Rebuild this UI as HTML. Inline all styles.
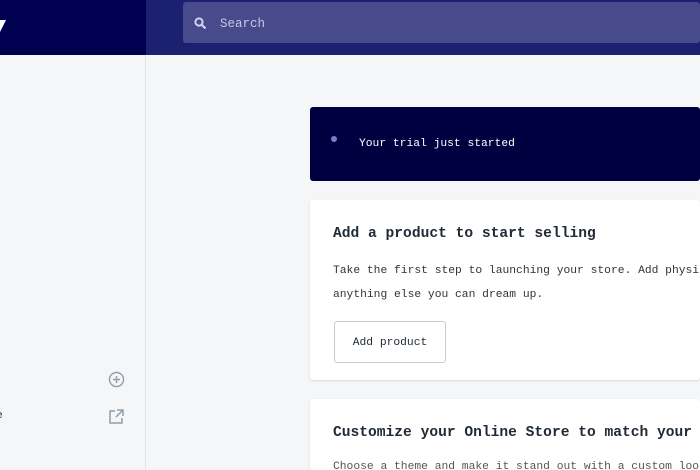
<!DOCTYPE html>
<html><head><style>
*{margin:0;padding:0;box-sizing:border-box}
html,body{width:700px;height:470px;overflow:hidden}
body{background:#f4f6f8;font-family:"Liberation Mono",monospace;position:relative}
.a{position:absolute}
</style></head><body>
<div class="a" style="left:0;top:0;width:146px;height:55px;background:#000050"></div>
<div class="a" style="left:0;top:20px;width:6px;height:12px;background:#fff;clip-path:polygon(0 0,100% 0,0 100%)"></div>
<div class="a" style="left:146px;top:0;width:554px;height:55px;background:#1c2070"></div>
<div class="a" style="left:183px;top:2px;width:517px;height:41px;background:#474b8b;border-radius:3px"></div>
<svg class="a" style="left:194px;top:17px" width="13" height="13" viewBox="0 0 13 13"><circle cx="5" cy="5" r="3.6" stroke="#cfd2ea" stroke-width="2" fill="none"/><path d="M7.6 7.6L11.5 11.5" stroke="#cfd2ea" stroke-width="2.2"/></svg>
<div class="a" style="left:220px;top:17px;color:#c5c8e4;font-size:12.5px">Search</div>
<div class="a" style="left:145px;top:55px;width:1px;height:415px;background:#e3e5e8"></div>
<div class="a" style="left:310px;top:107px;width:390px;height:74px;background:#000040;border-radius:3px"></div>
<div class="a" style="left:331px;top:136px;width:6px;height:6px;border-radius:50%;background:#7a7ccc"></div>
<div class="a" style="left:359px;top:138px;color:#fff;font-size:11.3px">Your trial just started</div>
<div class="a" style="left:310px;top:200px;width:390px;height:180px;background:#fff;border-radius:3px;box-shadow:0 1px 2px rgba(0,0,0,.12)"></div>
<div class="a" style="left:333px;top:226px;color:#212b36;font-size:14.6px;font-weight:bold">Add a product to start selling</div>
<div class="a" style="left:333px;top:259px;color:#333;font-size:11.3px;line-height:24px;white-space:nowrap">Take the first step to launching your store. Add physi<br>anything else you can dream up.</div>
<div class="a" style="left:334px;top:321px;width:112px;height:42px;border:1px solid #c4cdd5;border-radius:3px;background:#fff;color:#212b36;font-size:11.3px;line-height:42px;text-align:center">Add product</div>
<div class="a" style="left:310px;top:399px;width:390px;height:80px;background:#fff;border-radius:3px;box-shadow:0 1px 2px rgba(0,0,0,.12)"></div>
<div class="a" style="left:333px;top:425px;color:#212b36;font-size:14.6px;font-weight:bold;white-space:nowrap">Customize your Online Store to match your</div>
<div class="a" style="left:333px;top:461px;color:#555;font-size:11.3px;white-space:nowrap">Choose a theme and make it stand out with a custom loo</div>
<svg class="a" style="left:108px;top:371px" width="17" height="17" viewBox="0 0 17 17"><circle cx="8.5" cy="8.5" r="7" stroke="#919eab" stroke-width="1.4" fill="none"/><path d="M8.5 5v7M5 8.5h7" stroke="#919eab" stroke-width="1.4"/></svg>
<svg class="a" style="left:108px;top:408px" width="17" height="17" viewBox="0 0 17 17"><path d="M7 3H2v12h12v-5M9 2h6v6M15 2L8 9" stroke="#919eab" stroke-width="1.5" fill="none"/></svg>
<div class="a" style="left:-4px;top:410px;color:#333;font-size:11.3px">e</div>
</body></html>
